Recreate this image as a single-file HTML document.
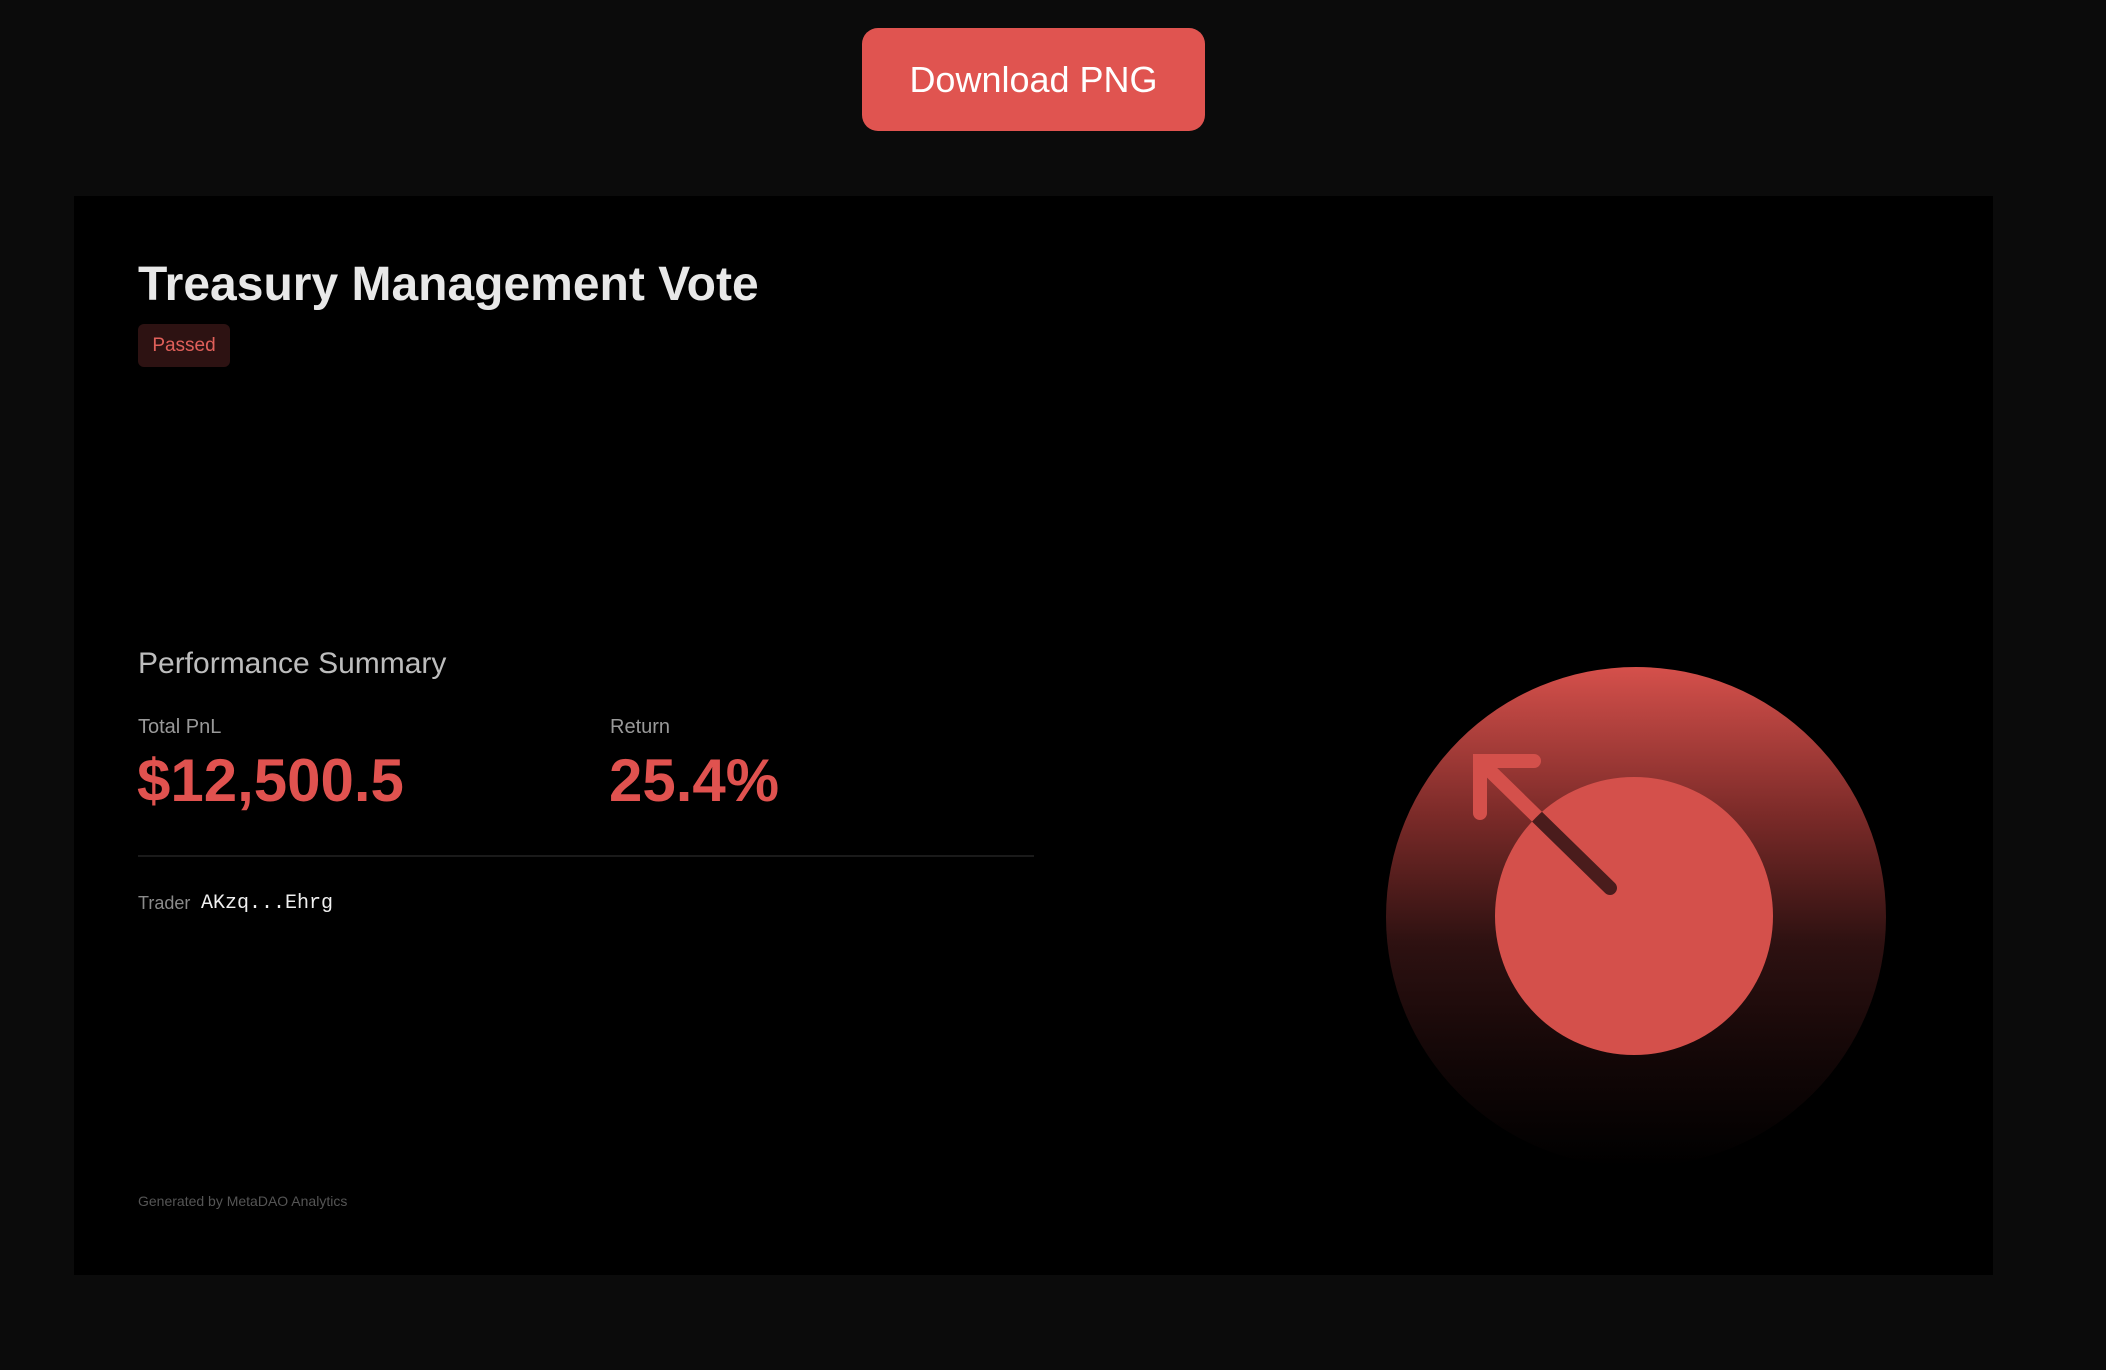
<!DOCTYPE html>
<html><head><meta charset="utf-8"><style>
html,body{margin:0;padding:0;background:#0b0b0b;width:2106px;height:1370px;overflow:hidden;font-family:"Liberation Sans",sans-serif;}
.a{position:absolute;line-height:1;white-space:nowrap;}
#btn{position:absolute;left:862px;top:28px;width:343px;height:103px;background:#e05450;border-radius:16px;color:#fff;font-size:36px;display:flex;align-items:center;justify-content:center;}
#card{position:absolute;left:74px;top:196px;width:1919px;height:1079px;background:#000;}
</style></head><body>
<div id="btn">Download PNG</div>
<div id="card"></div>
<div class="a" style="left:138px;top:261px;font-size:48px;font-weight:bold;color:#e8e8e8;">Treasury Management Vote</div>
<div class="a" style="left:138px;top:324px;width:92px;height:43px;background:#2d1212;border-radius:6px;color:#e0605a;font-size:19px;display:flex;align-items:center;justify-content:center;">Passed</div>
<div class="a" style="left:138px;top:649px;font-size:30px;color:#bdbdbd;">Performance Summary</div>
<div class="a" style="left:138px;top:717px;font-size:20px;color:#999;">Total PnL</div>
<div class="a" style="left:610px;top:717px;font-size:20px;color:#999;">Return</div>
<div class="a" style="left:137px;top:751px;font-size:60px;font-weight:bold;color:#e0524f;">$12,500.5</div>
<div class="a" style="left:609px;top:751px;font-size:60px;font-weight:bold;color:#e0524f;">25.4%</div>
<div class="a" style="left:138px;top:855px;width:896px;height:2px;background:#1a1a1a;"></div>
<div class="a" style="left:138px;top:894px;font-size:18px;color:#8a8a8a;">Trader</div>
<div class="a" style="left:201px;top:894px;font-size:20px;color:#f0f0f0;font-family:'Liberation Mono',monospace;">AKzq...Ehrg</div>
<div class="a" style="left:138px;top:1194px;font-size:14px;color:#555;">Generated by MetaDAO Analytics</div>
<svg class="a" style="left:0;top:0" width="2106" height="1370" viewBox="0 0 2106 1370">
<defs>
<linearGradient id="g" x1="0" y1="0" x2="0" y2="1">
<stop offset="0" stop-color="#d5504b"/>
<stop offset="0.3" stop-color="#7a2a28"/>
<stop offset="0.55" stop-color="#2e1111"/>
<stop offset="0.8" stop-color="#110606"/>
<stop offset="1" stop-color="#000"/>
</linearGradient>
<clipPath id="c"><circle cx="1634" cy="916" r="139"/></clipPath>
</defs>
<circle cx="1636" cy="917" r="250" fill="url(#g)"/>
<g fill="none" stroke="#d4504b" stroke-width="14" stroke-linecap="round" stroke-linejoin="miter">
<path d="M1610 888 L1480 761 M1534 761 L1480 761 L1480 813"/>
</g>
<circle cx="1634" cy="916" r="139" fill="#d4504b"/>
<g clip-path="url(#c)" fill="none" stroke="#4a1c1c" stroke-width="14" stroke-linecap="round">
<path d="M1610 888 L1480 761"/>
</g>
</svg>
</body></html>
